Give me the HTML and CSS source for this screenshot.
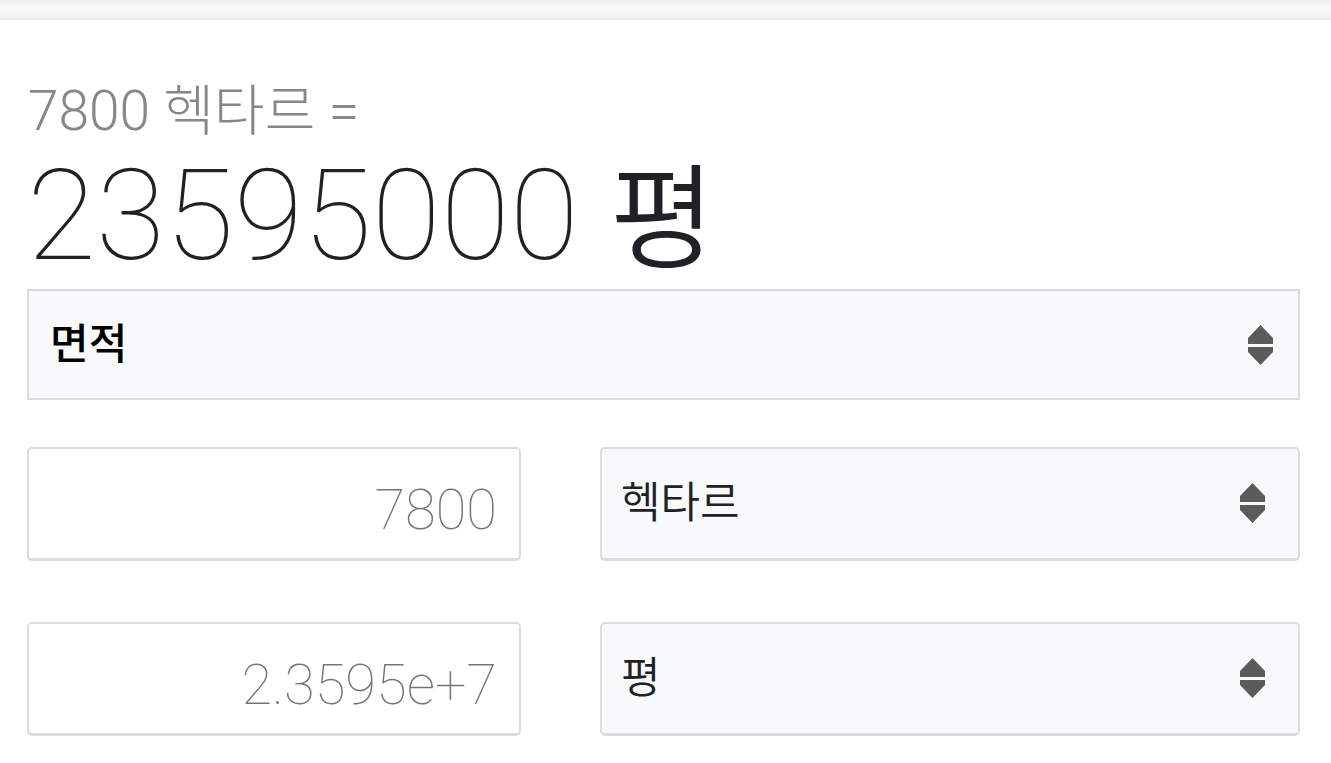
FILE: index.html
```html
<!DOCTYPE html>
<html lang="ko">
<head>
<meta charset="utf-8">
<title>단위 변환</title>
<link rel="stylesheet" href="styles.css">
</head>
<body>
<div class="topbar"></div>
<main class="conv">
  <div class="src">7800 헥타르 =</div>
  <div class="res"><span class="num">23595000</span> <span class="unit">평</span></div>
  <div class="select wide">
    <span class="label strong">면적</span>
    <svg class="arrows" viewBox="0 0 25 40" width="25" height="40"><path d="M12.5 0 L25 13 L25 19 L0 19 L0 13 Z"/><path d="M0 22 L25 22 L25 27 L12.5 40 L0 27 Z"/></svg>
  </div>
  <div class="row">
    <div class="field">7800</div>
    <div class="select small">
      <span class="label">헥타르</span>
      <svg class="arrows" viewBox="0 0 25 40" width="25" height="40"><path d="M12.5 0 L25 13 L25 19 L0 19 L0 13 Z"/><path d="M0 22 L25 22 L25 27 L12.5 40 L0 27 Z"/></svg>
    </div>
  </div>
  <div class="row second">
    <div class="field">2.3595e+7</div>
    <div class="select small">
      <span class="label">평</span>
      <svg class="arrows" viewBox="0 0 25 40" width="25" height="40"><path d="M12.5 0 L25 13 L25 19 L0 19 L0 13 Z"/><path d="M0 22 L25 22 L25 27 L12.5 40 L0 27 Z"/></svg>
    </div>
  </div>
</main>
</body>
</html>
```

FILE: styles.css
```css
html, body {
  margin: 0;
  padding: 0;
  background: #ffffff;
}
body {
  font-family: Roboto, "Noto Sans CJK KR", sans-serif;
  color: #202124;
}
.topbar {
  height: 18px;
  background: linear-gradient(#f1f1f1, #f8f9f9 40%, #f6f7f7 80%, #eeeeee);
  border-bottom: 2px solid #e8e9ea;
}
.conv {
  padding: 0 31px 0 27px;
}
.src {
  margin-top: 63px;
  font-size: 55px;
  line-height: 57px;
  font-weight: 300;
  color: #878787;
  padding-left: 1px;
  white-space: nowrap;
}
.res {
  margin-top: 11px;
  font-size: 126px;
  line-height: 130px;
  white-space: nowrap;
  color: #202124;
}
.res .num {
  font-weight: 100;
}
.res .unit {
  font-family: "Noto Sans CJK KR", sans-serif;
  font-weight: 350;
  font-size: 114px;
  line-height: 100px;
}
.select {
  display: flex;
  align-items: center;
  justify-content: space-between;
  background: #f8f9fa;
  border: 2px solid #dadce0;
  box-sizing: border-box;
  font-family: "Noto Sans CJK KR", sans-serif;
  color: #202124;
}
.select.wide {
  margin-top: 8px;
  height: 111px;
  padding: 0 25px 8px 21px;
  border-radius: 0;
}
.select.wide .arrows {
  margin-top: 8px;
}
.select.small {
  height: 114px;
  padding: 0 33px 8px 19px;
  border-radius: 5px;
  border-bottom-width: 3px;
}
.select.small .arrows {
  margin-top: 6px;
}
.label {
  font-size: 43px;
  line-height: 1;
  font-weight: 350;
}
.label.strong {
  font-size: 42px;
  font-weight: 500;
  color: #000000;
}
.arrows {
  display: block;
  fill: #5b5b5b;
}
.row {
  display: grid;
  grid-template-columns: 494px 1fr;
  column-gap: 79px;
  margin-top: 47px;
}
.row.second {
  margin-top: 61px;
}
.field {
  height: 114px;
  box-sizing: border-box;
  border: 2px solid #dadce0;
  border-bottom-width: 3px;
  border-radius: 5px;
  background: #ffffff;
  display: flex;
  align-items: center;
  justify-content: flex-end;
  padding: 13px 22px 0 0;
  font-size: 56px;
  font-weight: 100;
  color: #757575;
}
```
